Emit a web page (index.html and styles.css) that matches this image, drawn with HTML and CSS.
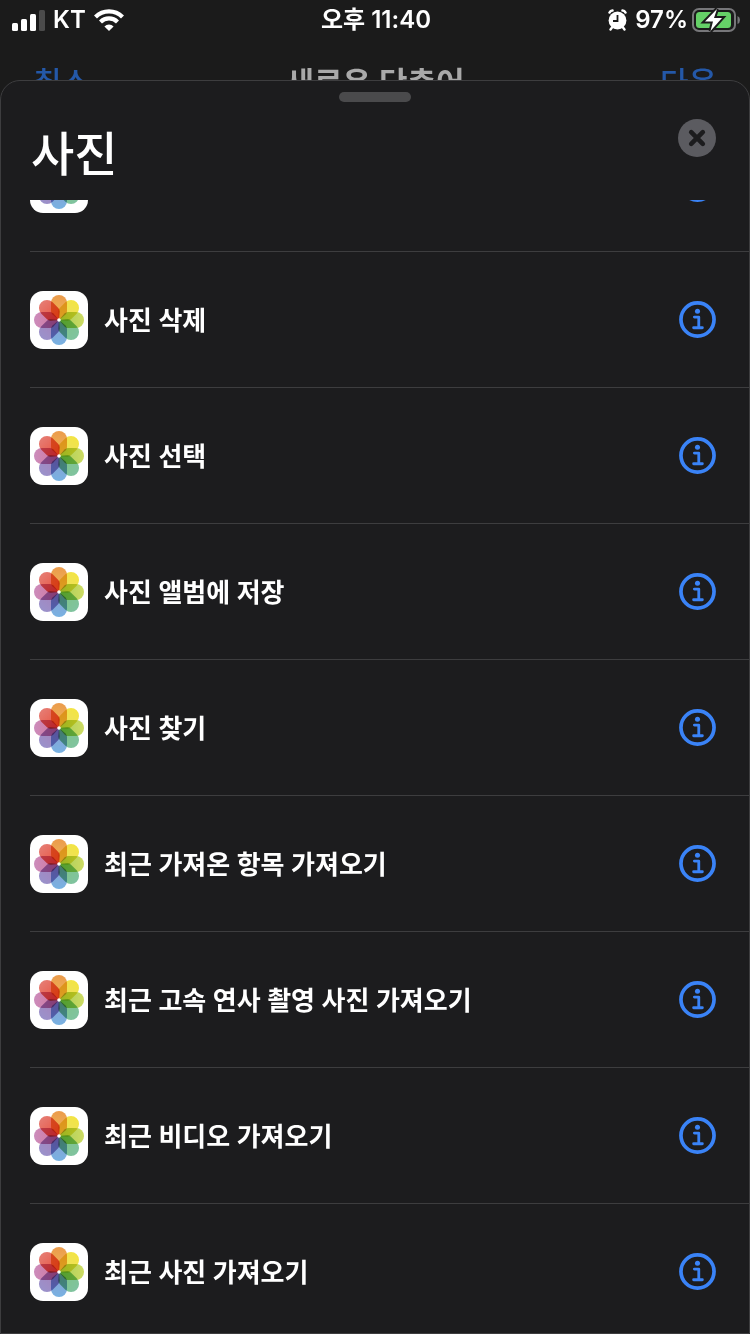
FILE: index.html
```
<!DOCTYPE html>
<html lang="ko">
<head>
    <meta charset="UTF-8">
    <meta name="viewport" content="width=device-width, initial-scale=1.0">
    <title>사진</title>
    <link rel="stylesheet" href="styles.css">
</head>
<body>
    <!-- Shared icons -->
    <svg class="icon-defs" width="0" height="0" aria-hidden="true">
        <defs>
            <linearGradient id="fade-n" x1="0" y1="0" x2="0" y2="1"><stop offset="0" stop-color="#eb9b4c"/><stop offset="1" stop-color="#efb85a"/></linearGradient>
            <linearGradient id="fade-ne" x1="0" y1="0" x2="0" y2="1"><stop offset="0" stop-color="#f3e443"/><stop offset="1" stop-color="#e9e06a"/></linearGradient>
            <linearGradient id="fade-e" x1="0" y1="0" x2="0" y2="1"><stop offset="0" stop-color="#cddb63"/><stop offset="1" stop-color="#a5cc58"/></linearGradient>
            <linearGradient id="fade-se" x1="0" y1="0" x2="0" y2="1"><stop offset="0" stop-color="#80c3a0"/><stop offset="1" stop-color="#7fc583"/></linearGradient>
            <linearGradient id="fade-s" x1="0" y1="0" x2="0" y2="1"><stop offset="0" stop-color="#78b2e2"/><stop offset="1" stop-color="#8d9fd2"/></linearGradient>
            <linearGradient id="fade-sw" x1="0" y1="0" x2="0" y2="1"><stop offset="0" stop-color="#9a92cb"/><stop offset="1" stop-color="#a981b8"/></linearGradient>
            <linearGradient id="fade-w" x1="0" y1="0" x2="0" y2="1"><stop offset="0" stop-color="#cc8cbc"/><stop offset="1" stop-color="#d3759b"/></linearGradient>
            <linearGradient id="fade-nw" x1="0" y1="0" x2="0" y2="1"><stop offset="0" stop-color="#e67c73"/><stop offset="1" stop-color="#e8503c"/></linearGradient>
            <path id="petal" d="M21 12a8 8 0 0 1 16 0v8q0 2-1.500 3.500L29 29l-6.500-5.500Q21 22 21 20z"/>
        </defs>
        <symbol id="photos" viewBox="0 0 58 58">
            <rect width="58" height="58" rx="13" fill="#fff"/>
            <use class="petal" href="#petal" fill="url(#fade-n)"/>
            <use class="petal" href="#petal" fill="url(#fade-ne)" transform="rotate(45 29 29)"/>
            <use class="petal" href="#petal" fill="url(#fade-e)" transform="rotate(90 29 29)"/>
            <use class="petal" href="#petal" fill="url(#fade-se)" transform="rotate(135 29 29)"/>
            <use class="petal" href="#petal" fill="url(#fade-s)" transform="rotate(180 29 29)"/>
            <use class="petal" href="#petal" fill="url(#fade-sw)" transform="rotate(225 29 29)"/>
            <use class="petal" href="#petal" fill="url(#fade-w)" transform="rotate(270 29 29)"/>
            <use class="petal" href="#petal" fill="url(#fade-nw)" transform="rotate(315 29 29)"/>
            <circle cx="29" cy="29" r="1.800" fill="#fff"/>
        </symbol>
        <symbol id="info" viewBox="0 0 38 38">
            <circle cx="19" cy="19" r="17" fill="none" stroke="currentColor" stroke-width="3.800"/>
            <circle cx="19" cy="10.500" r="2.600" fill="currentColor"/>
            <path d="M15.800 16.500h4.500v10.800M15 27.500h9" fill="none" stroke="currentColor" stroke-width="2.900" stroke-linecap="round" stroke-linejoin="round"/>
        </symbol>
    </svg>

    <!-- Status Bar -->
    <div class="status-bar">
        <div class="status-left">
            <svg width="33" height="22" viewBox="0 0 33 22" fill="#fff">
                <rect x="0" y="14" width="6" height="8" rx="1.500"/>
                <rect x="9" y="10" width="6" height="12" rx="1.500"/>
                <rect x="18" y="5" width="6" height="17" rx="1.500"/>
                <rect x="27" y="1" width="6" height="21" rx="1.500" fill="#4b4b4b"/>
            </svg>
            <span>KT</span>
            <svg width="30" height="22" viewBox="0 0 30 22">
                <path d="M1.500 8a19 19 0 0 1 27 0M6.500 13a12 12 0 0 1 17 0" fill="none" stroke="#fff" stroke-width="4.200"/>
                <path d="M15 22l-4.600-4.600a6.500 6.500 0 0 1 9.200 0z" fill="#fff"/>
            </svg>
        </div>
        <div class="status-time">오후 11:40</div>
        <div class="status-right">
            <svg width="19" height="22" viewBox="0 0 19 22">
                <circle cx="9.500" cy="11.500" r="8.900" fill="#fff"/>
                <path d="M1.600 3.500Q2.500 1.600 4.500 1.500M17.400 3.500Q16.500 1.600 14.500 1.500" fill="none" stroke="#fff" stroke-width="2.600" stroke-linecap="round"/>
                <path d="M4 18.500l-1.500 2M15 18.500l1.500 2" fill="none" stroke="#fff" stroke-width="2.400" stroke-linecap="round"/>
                <path d="M9.500 6v6H5" fill="none" stroke="#1b1b1b" stroke-width="1.800"/>
            </svg>
            <span>97%</span>
            <svg class="battery" width="48" height="24" viewBox="0 0 48 24">
                <rect x="1" y="1" width="42" height="22" rx="6" fill="none" stroke="#77777a" stroke-width="2"/>
                <path d="M45.500 8q2.500 1 2.500 4t-2.500 4z" fill="#77777a"/>
                <rect x="4" y="4" width="35" height="16" rx="3.500" fill="#65d067"/>
                <path d="M25 1L13 13.500h8L18.500 23 30 10h-8z" fill="#fff" stroke="#1b1b1b" stroke-width="4" paint-order="stroke"/>
            </svg>
        </div>
    </div>

    <!-- Screen behind the sheet -->
    <div class="nav-bar">
        <a href="#">취소</a>
        <span class="nav-title">새로운 단축어</span>
        <a href="#">다음</a>
    </div>

    <!-- Sheet -->
    <main class="sheet">
        <div class="grabber"></div>
        <header class="sheet-header">
            <h1>사진</h1>
            <button class="close-btn" aria-label="닫기">
                <svg width="38" height="38" viewBox="0 0 38 38">
                    <circle cx="19" cy="19" r="19" fill="#5b5b60"/>
                    <path d="M13.200 13.200l11.600 11.600M24.800 13.200L13.200 24.800" stroke="#1c1c1e" stroke-width="4.600" stroke-linecap="round"/>
                </svg>
            </button>
        </header>
        <div class="list-view">
            <ul class="action-list">
                <li class="action">
                    <svg class="app-icon"><use href="#photos"/></svg>
                    <span class="action-name"></span>
                    <button class="info-btn" aria-label="정보"><svg><use href="#info"/></svg></button>
                </li>
                <li class="action">
                    <svg class="app-icon"><use href="#photos"/></svg>
                    <span class="action-name">사진 삭제</span>
                    <button class="info-btn" aria-label="정보"><svg><use href="#info"/></svg></button>
                </li>
                <li class="action">
                    <svg class="app-icon"><use href="#photos"/></svg>
                    <span class="action-name">사진 선택</span>
                    <button class="info-btn" aria-label="정보"><svg><use href="#info"/></svg></button>
                </li>
                <li class="action">
                    <svg class="app-icon"><use href="#photos"/></svg>
                    <span class="action-name">사진 앨범에 저장</span>
                    <button class="info-btn" aria-label="정보"><svg><use href="#info"/></svg></button>
                </li>
                <li class="action">
                    <svg class="app-icon"><use href="#photos"/></svg>
                    <span class="action-name">사진 찾기</span>
                    <button class="info-btn" aria-label="정보"><svg><use href="#info"/></svg></button>
                </li>
                <li class="action">
                    <svg class="app-icon"><use href="#photos"/></svg>
                    <span class="action-name">최근 가져온 항목 가져오기</span>
                    <button class="info-btn" aria-label="정보"><svg><use href="#info"/></svg></button>
                </li>
                <li class="action">
                    <svg class="app-icon"><use href="#photos"/></svg>
                    <span class="action-name">최근 고속 연사 촬영 사진 가져오기</span>
                    <button class="info-btn" aria-label="정보"><svg><use href="#info"/></svg></button>
                </li>
                <li class="action">
                    <svg class="app-icon"><use href="#photos"/></svg>
                    <span class="action-name">최근 비디오 가져오기</span>
                    <button class="info-btn" aria-label="정보"><svg><use href="#info"/></svg></button>
                </li>
                <li class="action">
                    <svg class="app-icon"><use href="#photos"/></svg>
                    <span class="action-name">최근 사진 가져오기</span>
                    <button class="info-btn" aria-label="정보"><svg><use href="#info"/></svg></button>
                </li>
            </ul>
        </div>
    </main>
</body>
</html>
```

FILE: styles.css
```
/* General Styles */
* {
    box-sizing: border-box;
}

body {
    margin: 0;
    height: 100vh;
    overflow: hidden;
    position: relative;
    background-color: #1b1b1b;
    color: #fff;
    font-family: Inter, "Noto Sans CJK KR", sans-serif;
}

svg {
    display: block;
}

button {
    padding: 0;
    border: none;
    background: none;
    cursor: pointer;
}

.icon-defs {
    position: absolute;
}

.petal {
    mix-blend-mode: multiply;
}

/* Status Bar */
.status-bar {
    display: grid;
    grid-template-columns: 1fr auto 1fr;
    align-items: center;
    height: 40px;
    padding: 0 10px 0 12px;
    font-size: 24px;
    font-weight: 600;
    line-height: 40px;
}

.status-left,
.status-right {
    display: flex;
    align-items: center;
    gap: 8px;
}

.status-right {
    justify-content: flex-end;
}

.battery {
    margin-left: -4px;
}

/* Screen behind the sheet */
.nav-bar {
    display: flex;
    justify-content: space-between;
    align-items: center;
    height: 80px;
    padding: 0 33px;
    font-size: 31px;
    font-weight: 500;
}

.nav-bar a {
    color: #2458a8;
    text-decoration: none;
}

.nav-title {
    color: #a9a9a9;
    font-weight: 600;
}

/* Sheet */
.sheet {
    position: absolute;
    top: 80px;
    right: 0;
    bottom: 0;
    left: 0;
    display: flex;
    flex-direction: column;
    background-color: #1c1c1e;
    border: 1px solid #3d3d3f;
    border-radius: 20px 20px 0 0;
    overflow: hidden;
}

.grabber {
    width: 72px;
    height: 10px;
    margin: 11px auto 0;
    border-radius: 5px;
    background-color: #4a4a4c;
}

.sheet-header {
    display: flex;
    justify-content: space-between;
    align-items: flex-start;
    height: 98px;
    padding: 17px 33px 0 30px;
}

.sheet-header h1 {
    margin: 0;
    font-size: 47px;
    font-weight: 500;
    line-height: 70px;
}

/* Action List */
.list-view {
    flex: 1;
    min-height: 0;
    overflow: hidden;
}

.action-list {
    list-style-type: none;
    margin: -84px 0 0;
    padding: 0 0 0 29px;
}

.action {
    display: flex;
    align-items: center;
    gap: 16px;
    height: 136px;
    padding-right: 33px;
    border-bottom: 1px solid #3d3d3f;
}

.app-icon {
    width: 58px;
    height: 58px;
    isolation: isolate;
}

.action-name {
    flex: 1;
    padding-top: 2px;
    font-size: 26px;
    font-weight: 600;
    line-height: 40px;
}

.info-btn {
    color: #3a83f7;
}

.info-btn svg {
    width: 37px;
    height: 37px;
}
```
